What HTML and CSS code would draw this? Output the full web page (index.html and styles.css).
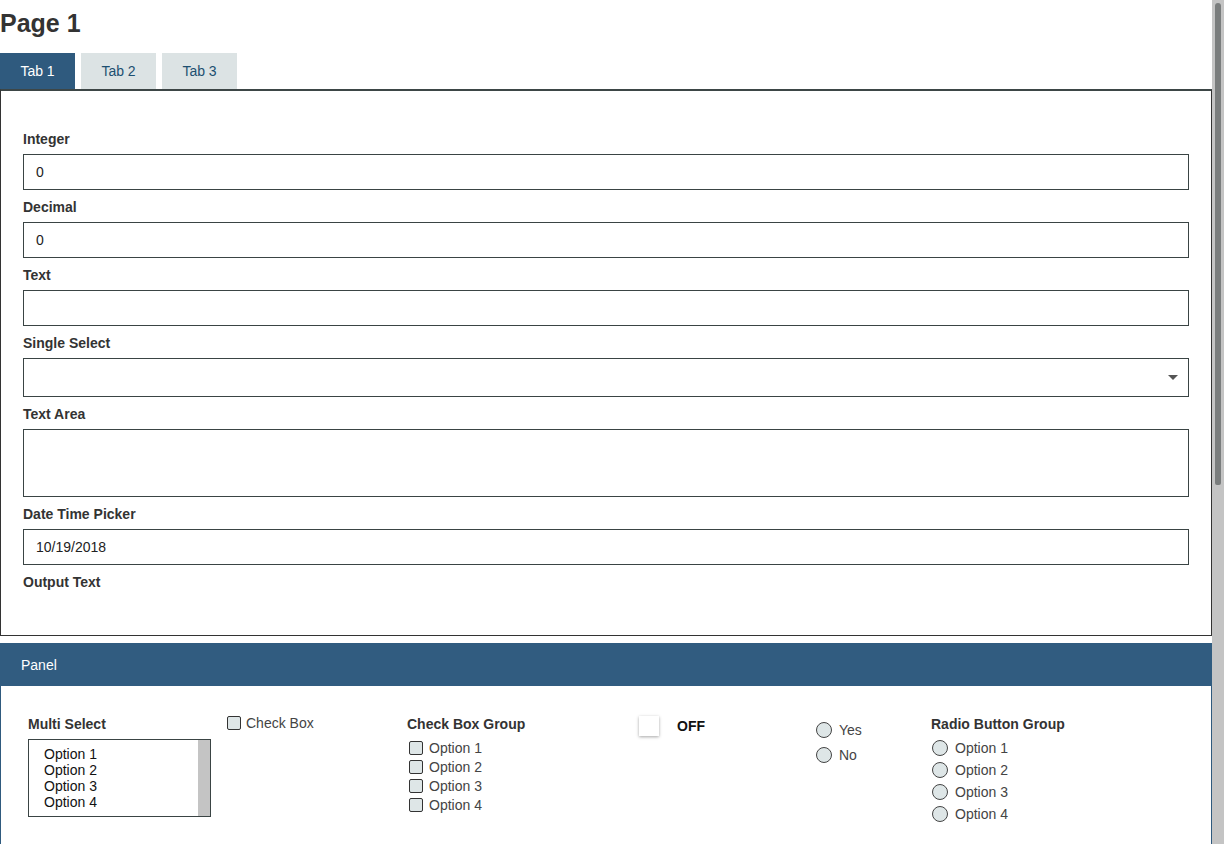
FILE: index.html
```html
<!DOCTYPE html>
<html>
<head>
<meta charset="utf-8">
<link rel="stylesheet" href="styles.css">
</head>
<body>
<div class="page">
<h1 class="page-title">Page 1</h1>
<div class="tabs">
  <div class="tab active">Tab 1</div>
  <div class="tab">Tab 2</div>
  <div class="tab">Tab 3</div>
</div>
<div class="tab-body">
  <div class="field">
    <div class="label">Integer</div>
    <div class="input">0</div>
  </div>
  <div class="field">
    <div class="label">Decimal</div>
    <div class="input">0</div>
  </div>
  <div class="field">
    <div class="label">Text</div>
    <div class="input"></div>
  </div>
  <div class="field">
    <div class="label">Single Select</div>
    <div class="input select"><span class="caret"></span></div>
  </div>
  <div class="field">
    <div class="label">Text Area</div>
    <div class="input textarea"></div>
  </div>
  <div class="field">
    <div class="label">Date Time Picker</div>
    <div class="input">10/19/2018</div>
  </div>
  <div class="field">
    <div class="label last">Output Text</div>
  </div>
</div>

<div class="panel">
  <div class="panel-head">Panel</div>
  <div class="panel-body">
    <div class="col col-multi">
      <div class="label">Multi Select</div>
      <div class="listbox">
        <div class="list-opts">
          <div>Option 1</div>
          <div>Option 2</div>
          <div>Option 3</div>
          <div>Option 4</div>
        </div>
        <div class="list-scroll"></div>
      </div>
    </div>
    <div class="col col-check">
      <div class="check-row single"><span class="cbox"></span><span>Check Box</span></div>
    </div>
    <div class="col col-cgroup">
      <div class="label">Check Box Group</div>
      <div class="cgroup">
        <div class="check-row"><span class="cbox"></span><span>Option 1</span></div>
        <div class="check-row"><span class="cbox"></span><span>Option 2</span></div>
        <div class="check-row"><span class="cbox"></span><span>Option 3</span></div>
        <div class="check-row"><span class="cbox"></span><span>Option 4</span></div>
      </div>
    </div>
    <div class="col col-toggle">
      <div class="toggle-row"><span class="toggle"></span><span class="off">OFF</span></div>
    </div>
    <div class="col col-yesno">
      <div class="radio-row yn"><span class="rbox"></span><span>Yes</span></div>
      <div class="radio-row yn"><span class="rbox"></span><span>No</span></div>
    </div>
    <div class="col col-rgroup">
      <div class="label">Radio Button Group</div>
      <div class="rgroup">
        <div class="radio-row"><span class="rbox"></span><span>Option 1</span></div>
        <div class="radio-row"><span class="rbox"></span><span>Option 2</span></div>
        <div class="radio-row"><span class="rbox"></span><span>Option 3</span></div>
        <div class="radio-row"><span class="rbox"></span><span>Option 4</span></div>
      </div>
    </div>
  </div>
</div>
</div>
<div class="scrollbar"><div class="thumb"></div></div>
</body>
</html>
```
FILE: styles.css
```css
body {
  margin: 0;
  font-family: "Liberation Sans", Arial, sans-serif;
  font-size: 14px;
  color: #333;
  background: #fff;
}
.page {
  margin-right: 12px;
}
.scrollbar {
  position: fixed;
  top: 0;
  right: 0;
  width: 12px;
  height: 100vh;
  background: #c4c4c4;
  box-sizing: border-box;
  padding: 3px 3px 0 3px;
}
.thumb {
  height: 482px;
  background: #7a7d7d;
  border-radius: 3px 3px 2px 2px;
}
.page-title {
  font-size: 25px;
  line-height: 30px;
  font-weight: bold;
  margin: 8px 0 15px 0;
  color: #333;
}
.tabs {
  display: flex;
  gap: 6px;
  height: 36px;
}
.tab {
  width: 75px;
  background: #dce3e4;
  color: #1d4f70;
  display: flex;
  align-items: center;
  justify-content: center;
  font-size: 14px;
}
.tab.active {
  background: #2f5a7e;
  color: #fff;
}
.tab-body {
  border: 1px solid #333;
  border-top: 2px solid #3d4646;
  padding: 38px 22px 43px 22px;
}
.field .label {
  margin-bottom: 5px;
}
.field .label.last {
  margin-bottom: 0;
}
.label {
  font-weight: bold;
  line-height: 20px;
  color: #333;
}
.input {
  height: 36px;
  box-sizing: border-box;
  border: 1px solid #3a4444;
  padding: 0 12px;
  display: flex;
  align-items: center;
  color: #222;
  margin-bottom: 7px;
}
.input.select {
  height: 39px;
  justify-content: flex-end;
  padding-right: 10px;
}
.caret {
  width: 0;
  height: 0;
  border-left: 5px solid transparent;
  border-right: 5px solid transparent;
  border-top: 5px solid #555;
}
.input.textarea {
  height: 68px;
}
.panel {
  margin-top: 7px;
  border-left: 1px solid #2f5a7e;
  border-right: 1px solid #2f5a7e;
  min-height: 830px;
}
.panel-head {
  height: 43px;
  background: #315c80;
  color: #fff;
  display: flex;
  align-items: center;
  padding-left: 21px;
  margin-left: -1px;
  margin-right: -1px;
}
.panel-body {
  display: grid;
  grid-template-columns: 199px 180px 231px 178px 115px auto;
  padding: 28px 0 0 27px;
}
.col {
  display: flex;
  flex-direction: column;
}
.listbox {
  margin-top: 5px;
  width: 183px;
  height: 78px;
  box-sizing: border-box;
  border: 1px solid #3a4444;
  display: flex;
}
.list-opts {
  flex: 1;
  padding: 6px 0 0 15px;
  color: #111;
  line-height: 16px;
}
.list-scroll {
  width: 12px;
  background: #c4c4c4;
}
.check-row {
  display: flex;
  align-items: center;
  height: 19px;
  color: #444;
}
.check-row.single {
  height: 20px;
  margin-top: -1px;
}
.cbox {
  width: 14px;
  height: 14px;
  box-sizing: border-box;
  background: #dee6e7;
  border: 1px solid #333;
  border-radius: 2px;
  margin-right: 5px;
}
.col-cgroup .cbox {
  margin-left: 2px;
  margin-right: 6px;
}
.cgroup {
  margin-top: 4px;
}
.toggle-row {
  display: flex;
  align-items: center;
  height: 24px;
}
.toggle {
  width: 20px;
  height: 20px;
  background: #fff;
  box-shadow: 0 1px 3px rgba(0, 0, 0, 0.35);
  margin-left: 1px;
  margin-right: 18px;
}
.off {
  font-weight: bold;
  color: #111;
}
.col-yesno {
  padding-top: 3px;
}
.radio-row {
  display: flex;
  align-items: center;
  height: 22px;
  color: #444;
}
.radio-row.yn {
  height: 25px;
}
.rbox {
  width: 16px;
  height: 16px;
  box-sizing: border-box;
  border-radius: 50%;
  border: 1px solid #444;
  background: #dee6e7;
  margin-right: 7px;
}
.col-rgroup .rbox {
  margin-left: 1px;
}
.rgroup {
  margin-top: 3px;
}
```
